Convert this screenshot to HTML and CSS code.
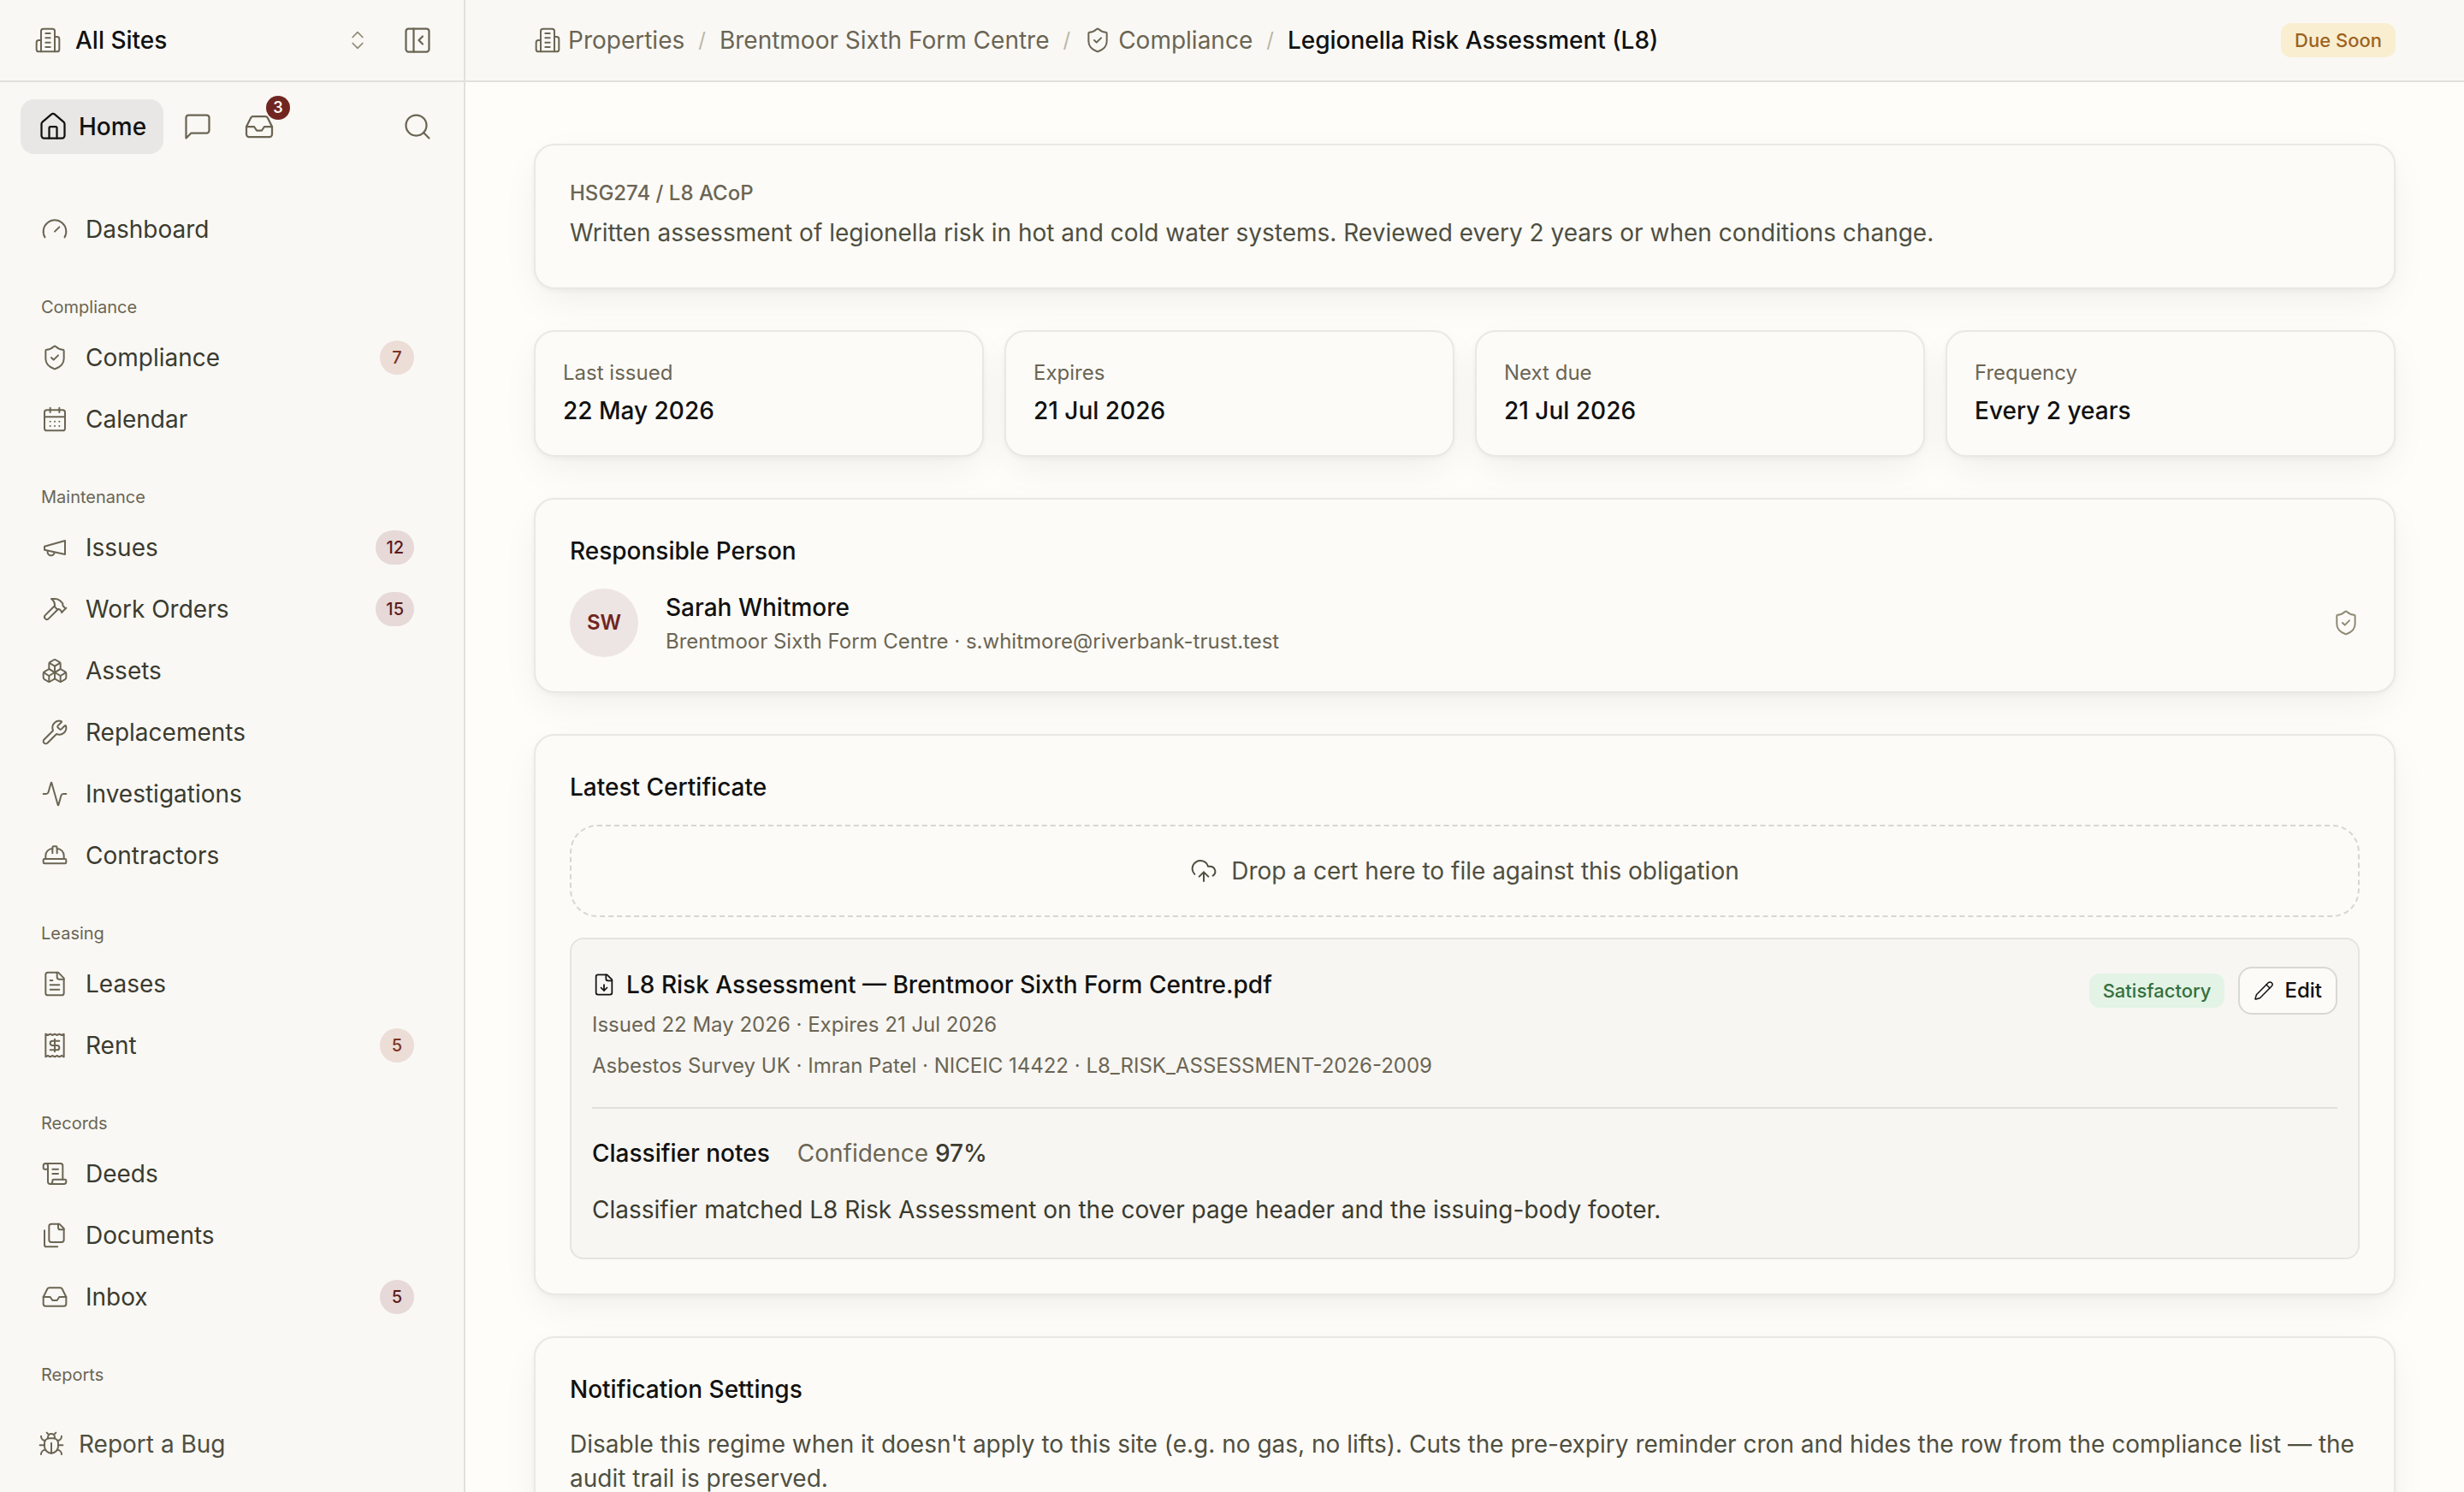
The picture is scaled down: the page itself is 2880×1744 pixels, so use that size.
FILE: index.html
```html
<!DOCTYPE html>
<html lang="en">
<head>
<meta charset="utf-8">
<title>Legionella Risk Assessment (L8)</title>
<link rel="stylesheet" href="styles.css">
</head>
<body>
<svg class="sprite" aria-hidden="true">
  <symbol id="building" viewBox="0 0 24 24"><path d="M6 22V4a2 2 0 0 1 2-2h8a2 2 0 0 1 2 2v18Z"/><path d="M6 12H4a2 2 0 0 0-2 2v6a2 2 0 0 0 2 2h2"/><path d="M18 9h2a2 2 0 0 1 2 2v9a2 2 0 0 1-2 2h-2"/><path d="M10 6h4M10 10h4M10 14h4M10 18h4"/></symbol>
  <symbol id="chevrons" viewBox="0 0 24 24"><path d="m7 15 5 5 5-5M7 9l5-5 5 5"/></symbol>
  <symbol id="panel" viewBox="0 0 24 24"><rect width="18" height="18" x="3" y="3" rx="2"/><path d="M9 3v18M16 15l-3-3 3-3"/></symbol>
  <symbol id="home" viewBox="0 0 24 24"><path d="M15 21v-8a1 1 0 0 0-1-1h-4a1 1 0 0 0-1 1v8"/><path d="M3 10a2 2 0 0 1 .709-1.528l7-5.999a2 2 0 0 1 2.582 0l7 5.999A2 2 0 0 1 21 10v9a2 2 0 0 1-2 2H5a2 2 0 0 1-2-2z"/></symbol>
  <symbol id="message" viewBox="0 0 24 24"><path d="M21 15a2 2 0 0 1-2 2H7l-4 4V5a2 2 0 0 1 2-2h14a2 2 0 0 1 2 2z"/></symbol>
  <symbol id="inbox" viewBox="0 0 24 24"><path d="M22 12h-6l-2 3h-4l-2-3H2"/><path d="M5.45 5.11 2 12v6a2 2 0 0 0 2 2h16a2 2 0 0 0 2-2v-6l-3.45-6.89A2 2 0 0 0 16.76 4H7.24a2 2 0 0 0-1.79 1.11z"/></symbol>
  <symbol id="search" viewBox="0 0 24 24"><circle cx="11" cy="11" r="8"/><path d="m21 21-4.3-4.3"/></symbol>
  <symbol id="gauge" viewBox="0 0 24 24"><path d="m12 14 4-4"/><path d="M3.34 19a10 10 0 1 1 17.32 0"/></symbol>
  <symbol id="shield" viewBox="0 0 24 24"><path d="M20 13c0 5-3.5 7.5-7.66 8.95a1 1 0 0 1-.67-.01C7.5 20.5 4 18 4 13V6a1 1 0 0 1 1-1c2 0 4.5-1.2 6.24-2.72a1.17 1.17 0 0 1 1.52 0C14.51 3.81 17 5 19 5a1 1 0 0 1 1 1z"/><path d="m9 12 2 2 4-4"/></symbol>
  <symbol id="calendar" viewBox="0 0 24 24"><path d="M8 2v4M16 2v4"/><rect width="18" height="18" x="3" y="4" rx="2"/><path d="M3 10h18M8 14h.01M12 14h.01M16 14h.01M8 18h.01M12 18h.01M16 18h.01"/></symbol>
  <symbol id="megaphone" viewBox="0 0 24 24"><path d="m3 11 18-5v12L3 14v-3z"/><path d="M11.6 16.8a3 3 0 1 1-5.8-1.6"/></symbol>
  <symbol id="hammer" viewBox="0 0 24 24"><path d="m15 12-8.373 8.373a1 1 0 1 1-3-3L12 9"/><path d="m18 15 4-4"/><path d="m21.5 11.5-1.914-1.914A2 2 0 0 1 19 8.172V7l-2.26-2.26a6 6 0 0 0-4.202-1.756L9 2.96l.92.82A6.18 6.18 0 0 1 12 8.4V10l2 2h1.172a2 2 0 0 1 1.414.586L18.5 14.5"/></symbol>
  <symbol id="boxes" viewBox="0 0 24 24"><path d="M2.97 12.92A2 2 0 0 0 2 14.63v3.24a2 2 0 0 0 .97 1.71l3 1.8a2 2 0 0 0 2.06 0L12 19v-5.5l-5-3-4.03 2.42Z"/><path d="m7 16.5-4.74-2.85M7 16.5l5-3M7 16.5v5.17"/><path d="M12 13.5V19l3.97 2.38a2 2 0 0 0 2.06 0l3-1.8a2 2 0 0 0 .97-1.71v-3.24a2 2 0 0 0-.97-1.71L17 10.5l-5 3Z"/><path d="m17 16.5-5-3M17 16.5l4.74-2.85M17 16.5v5.17"/><path d="M7.97 4.42A2 2 0 0 0 7 6.13v4.37l5 3 5-3V6.13a2 2 0 0 0-.97-1.71l-3-1.8a2 2 0 0 0-2.06 0l-3 1.8Z"/><path d="M12 8 7.26 5.15M12 8l4.74-2.85M12 13.5V8"/></symbol>
  <symbol id="wrench" viewBox="0 0 24 24"><path d="M14.7 6.3a1 1 0 0 0 0 1.4l1.6 1.6a1 1 0 0 0 1.4 0l3.106-3.105c.32-.322.863-.22.983.218a6 6 0 0 1-8.259 7.057l-7.91 7.91a1 1 0 0 1-2.999-3l7.91-7.91a6 6 0 0 1 7.057-8.259c.438.12.54.662.219.984z"/></symbol>
  <symbol id="activity" viewBox="0 0 24 24"><path d="M22 12h-2.48a2 2 0 0 0-1.93 1.46l-2.35 8.36a.25.25 0 0 1-.48 0L9.24 2.18a.25.25 0 0 0-.48 0l-2.35 8.36A2 2 0 0 1 4.49 12H2"/></symbol>
  <symbol id="hardhat" viewBox="0 0 24 24"><path d="M10 10V5a1 1 0 0 1 1-1h2a1 1 0 0 1 1 1v5"/><path d="M14 6a6 6 0 0 1 6 6v3"/><path d="M4 15v-3a6 6 0 0 1 6-6"/><rect x="2" y="15" width="20" height="4" rx="1"/></symbol>
  <symbol id="filetext" viewBox="0 0 24 24"><path d="M15 2H6a2 2 0 0 0-2 2v16a2 2 0 0 0 2 2h12a2 2 0 0 0 2-2V7Z"/><path d="M14 2v4a2 2 0 0 0 2 2h4M10 9H8M16 13H8M16 17H8"/></symbol>
  <symbol id="receipt" viewBox="0 0 24 24"><path d="M4 2v20l2-1 2 1 2-1 2 1 2-1 2 1 2-1 2 1V2l-2 1-2-1-2 1-2-1-2 1-2-1-2 1Z"/><path d="M16 8h-6a2 2 0 1 0 0 4h4a2 2 0 1 1 0 4H8M12 17.5v-11"/></symbol>
  <symbol id="scroll" viewBox="0 0 24 24"><path d="M15 12h-5M15 8h-5M19 17V5a2 2 0 0 0-2-2H4"/><path d="M8 21h12a2 2 0 0 0 2-2v-1a1 1 0 0 0-1-1H11a1 1 0 0 0-1 1v1a2 2 0 1 1-4 0V5a2 2 0 1 0-4 0v2a1 1 0 0 0 1 1h3"/></symbol>
  <symbol id="files" viewBox="0 0 24 24"><path d="M20 7h-3a2 2 0 0 1-2-2V2"/><path d="M9 18a2 2 0 0 1-2-2V4a2 2 0 0 1 2-2h7l4 4v10a2 2 0 0 1-2 2Z"/><path d="M3 7.6v12.8A1.6 1.6 0 0 0 4.6 22h9.8"/></symbol>
  <symbol id="bug" viewBox="0 0 24 24"><path d="M12 20v-9"/><path d="M14 7a4 4 0 0 1 4 4v3a6 6 0 0 1-12 0v-3a4 4 0 0 1 4-4z"/><path d="M14.12 3.88 16 2M8 2l1.88 1.88M9 7.13V6a3 3 0 1 1 6 0v1.13M21 21a4 4 0 0 0-3.81-4M21 5a4 4 0 0 1-3.55 3.97M22 13h-4M3 21a4 4 0 0 1 3.81-4M3 5a4 4 0 0 0 3.55 3.97M6 13H2"/></symbol>
  <symbol id="upload" viewBox="0 0 24 24"><path d="M12 13v8M4 14.899A7 7 0 1 1 15.71 8h1.79a4.5 4.5 0 0 1 2.5 8.242M8 17l4-4 4 4"/></symbol>
  <symbol id="filedown" viewBox="0 0 24 24"><path d="M15 2H6a2 2 0 0 0-2 2v16a2 2 0 0 0 2 2h12a2 2 0 0 0 2-2V7Z"/><path d="M14 2v4a2 2 0 0 0 2 2h4M12 18v-6M9 15l3 3 3-3"/></symbol>
  <symbol id="pencil" viewBox="0 0 24 24"><path d="M21.174 6.812a1 1 0 0 0-3.986-3.987L3.842 16.174a2 2 0 0 0-.5.83l-1.321 4.352a.5.5 0 0 0 .623.622l4.353-1.32a2 2 0 0 0 .83-.497z"/><path d="m15 5 4 4"/></symbol>
</svg>

<div class="app">
  <aside class="sidebar">
    <div class="site-bar">
      <button class="site-switch"><svg class="icon"><use href="#building"/></svg><span>All Sites</span><svg class="icon icon-sm"><use href="#chevrons"/></svg></button>
      <button class="icon-btn"><svg class="icon icon-lg"><use href="#panel"/></svg></button>
    </div>
    <div class="tabs">
      <button class="tab-home"><svg class="icon icon-lg"><use href="#home"/></svg><span>Home</span></button>
      <button class="icon-btn"><svg class="icon icon-lg"><use href="#message"/></svg></button>
      <button class="icon-btn"><svg class="icon icon-lg"><use href="#inbox"/></svg><span class="dot">3</span></button>
      <button class="icon-btn push"><svg class="icon icon-lg"><use href="#search"/></svg></button>
    </div>
    <nav class="nav">
      <section class="group">
        <a class="item"><svg class="icon"><use href="#gauge"/></svg><span>Dashboard</span></a>
      </section>
      <section class="group">
        <h2 class="group-label">Compliance</h2>
        <a class="item"><svg class="icon"><use href="#shield"/></svg><span>Compliance</span><b class="count count-warm">7</b></a>
        <a class="item"><svg class="icon"><use href="#calendar"/></svg><span>Calendar</span></a>
      </section>
      <section class="group">
        <h2 class="group-label">Maintenance</h2>
        <a class="item"><svg class="icon"><use href="#megaphone"/></svg><span>Issues</span><b class="count">12</b></a>
        <a class="item"><svg class="icon"><use href="#hammer"/></svg><span>Work Orders</span><b class="count">15</b></a>
        <a class="item"><svg class="icon"><use href="#boxes"/></svg><span>Assets</span></a>
        <a class="item"><svg class="icon"><use href="#wrench"/></svg><span>Replacements</span></a>
        <a class="item"><svg class="icon"><use href="#activity"/></svg><span>Investigations</span></a>
        <a class="item"><svg class="icon"><use href="#hardhat"/></svg><span>Contractors</span></a>
      </section>
      <section class="group">
        <h2 class="group-label">Leasing</h2>
        <a class="item"><svg class="icon"><use href="#filetext"/></svg><span>Leases</span></a>
        <a class="item"><svg class="icon"><use href="#receipt"/></svg><span>Rent</span><b class="count count-warm">5</b></a>
      </section>
      <section class="group">
        <h2 class="group-label">Records</h2>
        <a class="item"><svg class="icon"><use href="#scroll"/></svg><span>Deeds</span></a>
        <a class="item"><svg class="icon"><use href="#files"/></svg><span>Documents</span></a>
        <a class="item"><svg class="icon"><use href="#inbox"/></svg><span>Inbox</span><b class="count">5</b></a>
      </section>
      <section class="group">
        <h2 class="group-label">Reports</h2>
      </section>
    </nav>
    <div class="sidebar-foot"><svg class="icon"><use href="#bug"/></svg><span>Report a Bug</span></div>
  </aside>

  <div class="page">
    <header class="topbar">
      <nav class="crumbs">
        <a class="crumb"><svg class="icon"><use href="#building"/></svg><span>Properties</span></a>
        <span class="slash">/</span>
        <a class="crumb"><span>Brentmoor Sixth Form Centre</span></a>
        <span class="slash">/</span>
        <a class="crumb"><svg class="icon"><use href="#shield"/></svg><span>Compliance</span></a>
        <span class="slash">/</span>
        <span class="crumb current">Legionella Risk Assessment (L8)</span>
      </nav>
      <span class="pill pill-amber">Due Soon</span>
    </header>

    <main class="content">
      <section class="card intro">
        <p class="eyebrow">HSG274 / L8 ACoP</p>
        <p class="lede">Written assessment of legionella risk in hot and cold water systems. Reviewed every 2 years or when conditions change.</p>
      </section>

      <div class="stats">
        <div class="card stat"><span class="stat-label">Last issued</span><strong class="stat-value">22 May 2026</strong></div>
        <div class="card stat"><span class="stat-label">Expires</span><strong class="stat-value">21 Jul 2026</strong></div>
        <div class="card stat"><span class="stat-label">Next due</span><strong class="stat-value">21 Jul 2026</strong></div>
        <div class="card stat"><span class="stat-label">Frequency</span><strong class="stat-value">Every 2 years</strong></div>
      </div>

      <section class="card block">
        <h3 class="title">Responsible Person</h3>
        <div class="person">
          <span class="avatar">SW</span>
          <div class="person-text">
            <span class="name">Sarah Whitmore</span>
            <span class="small">Brentmoor Sixth Form Centre · s.whitmore@riverbank-trust.test</span>
          </div>
          <svg class="icon icon-faint"><use href="#shield"/></svg>
        </div>
      </section>

      <section class="card block">
        <h3 class="title">Latest Certificate</h3>
        <div class="dropzone"><svg class="icon"><use href="#upload"/></svg><span>Drop a cert here to file against this obligation</span></div>
        <div class="cert">
          <div class="cert-head">
            <div class="cert-info">
              <div class="cert-name"><svg class="icon icon-sm"><use href="#filedown"/></svg><span>L8 Risk Assessment — Brentmoor Sixth Form Centre.pdf</span></div>
              <span class="small">Issued 22 May 2026 · Expires 21 Jul 2026</span>
              <span class="small">Asbestos Survey UK · Imran Patel · NICEIC 14422 · L8_RISK_ASSESSMENT-2026-2009</span>
            </div>
            <div class="cert-actions">
              <span class="pill pill-green">Satisfactory</span>
              <button class="edit"><svg class="icon icon-xs"><use href="#pencil"/></svg><span>Edit</span></button>
            </div>
          </div>
          <div class="notes">
            <div class="notes-head"><strong>Classifier notes</strong><span class="confidence">Confidence <b>97%</b></span></div>
            <p class="notes-text">Classifier matched L8 Risk Assessment on the cover page header and the issuing-body footer.</p>
          </div>
        </div>
      </section>

      <section class="card block">
        <h3 class="title">Notification Settings</h3>
        <p class="body-text">Disable this regime when it doesn't apply to this site (e.g. no gas, no lifts). Cuts the pre-expiry reminder cron and hides the row from the compliance list — the audit trail is preserved.</p>
      </section>
    </main>
  </div>
</div>
</body>
</html>
```

FILE: styles.css
```css
:root {
  --ink: #111110;
  --text: #3b3b2f;
  --body: #4f4f40;
  --muted: #6b6553;
  --faint: #8f8a74;
  --line: #e1e0dd;
  --card-line: #e8e8e5;
  --maroon: #712521;
}

* { box-sizing: border-box; margin: 0; padding: 0; }

body {
  height: 1744px;
  overflow: hidden;
  background: #fefdf9;
  color: var(--ink);
  font: 400 28px/40px Inter, "Liberation Sans", sans-serif;
}

button { border: 0; background: none; font: inherit; color: inherit; }
.sprite { position: absolute; width: 0; height: 0; }

.icon {
  width: 32px;
  height: 32px;
  flex: none;
  fill: none;
  stroke: currentColor;
  stroke-width: 1.5;
  stroke-linecap: round;
  stroke-linejoin: round;
}
.icon-lg { width: 36px; height: 36px; }
.icon-sm { width: 28px; height: 28px; }
.icon-xs { width: 24px; height: 24px; }
.icon-faint { color: var(--faint); margin-left: auto; }

.app { display: flex; height: 1744px; }

/* Sidebar */
.sidebar {
  width: 544px;
  flex: none;
  display: flex;
  flex-direction: column;
  background: #f9f8f5;
  border-right: 2px solid var(--line);
}
.site-bar {
  height: 96px;
  flex: none;
  display: flex;
  align-items: center;
  justify-content: space-between;
  padding: 0 22px 0 40px;
  border-bottom: 2px solid var(--line);
}
.site-switch { display: flex; align-items: center; gap: 16px; width: 392px; font-weight: 500; color: var(--ink); }
.site-switch .icon { color: var(--muted); }
.site-switch .icon-sm { margin-left: auto; color: var(--faint); }
.icon-btn {
  position: relative;
  width: 64px;
  height: 64px;
  display: flex;
  align-items: center;
  justify-content: center;
  color: var(--muted);
}
.tabs { display: flex; gap: 8px; padding: 20px 22px 0 24px; flex: none; }
.tab-home {
  display: flex;
  align-items: center;
  gap: 12px;
  height: 64px;
  padding: 0 20px;
  border-radius: 16px;
  background: #e8e7e5;
  font-weight: 500;
}
.push { margin-left: auto; }
.dot {
  position: absolute;
  top: -4px;
  right: -4px;
  width: 28px;
  height: 28px;
  border-radius: 14px;
  background: var(--maroon);
  color: #fbf6f0;
  font-size: 18px;
  line-height: 28px;
  font-weight: 600;
  text-align: center;
}
.nav { flex: 1; min-height: 0; overflow: hidden; padding: 56px 58px 0 48px; display: flex; flex-direction: column; gap: 32px; }
.group { display: flex; flex-direction: column; gap: 8px; flex: none; }
.group-label { height: 46px; line-height: 54px; font-size: 20px; font-weight: 400; color: var(--muted); }
.item { display: flex; align-items: center; gap: 20px; height: 64px; color: var(--text); }
.item .icon { color: var(--muted); }
.count {
  min-width: 40px;
  height: 40px;
  margin-left: auto;
  padding: 0 12px;
  border-radius: 20px;
  background: #e6d9d7;
  color: #5d1a19;
  font-size: 20px;
  line-height: 40px;
  font-weight: 500;
  text-align: center;
}
.count-warm { background: #ecddd7; color: #7d3323; }
.sidebar-foot { height: 112px; flex: none; display: flex; align-items: center; gap: 16px; padding-left: 44px; color: var(--body); }
.sidebar-foot .icon { color: var(--muted); }

/* Top bar */
.page { flex: 1; min-width: 0; }
.topbar {
  height: 96px;
  display: flex;
  align-items: center;
  justify-content: space-between;
  padding: 0 80px;
  background: #f9f8f5;
  border-bottom: 2px solid var(--line);
}
.crumbs { display: flex; align-items: center; gap: 16px; color: var(--muted); }
.crumb { display: flex; align-items: center; gap: 8px; }
.current { color: var(--ink); font-weight: 500; }
.slash { color: #bab7a4; font-size: 24px; }
.pill { height: 40px; padding: 0 16px; border-radius: 12px; font-size: 22px; line-height: 40px; font-weight: 500; }
.pill-amber { background: #faeed1; color: #9c6321; }
.pill-green { background: #e3f3e5; color: #34703f; }

/* Cards */
.content { display: flex; flex-direction: column; gap: 48px; padding: 72px 80px 0; }
.card {
  background: #fcfbf8;
  border: 2px solid var(--card-line);
  border-radius: 24px;
  box-shadow: 0 2px 6px rgba(0, 0, 0, .04), 0 16px 48px -8px rgba(0, 0, 0, .07);
}
.intro { height: 170px; padding: 40px; }
.eyebrow { font-size: 24px; line-height: 32px; font-weight: 500; color: var(--muted); }
.lede { margin-top: 10px; color: var(--body); }
.stats { display: grid; grid-template-columns: repeat(4, 1fr); gap: 24px; }
.stat { display: flex; flex-direction: column; gap: 8px; padding: 32px; }
.stat-label { font-size: 24px; line-height: 32px; color: var(--muted); }
.stat-value { font-weight: 500; }
.block { display: flex; flex-direction: column; gap: 24px; padding: 40px; }
.title { font-size: 28px; font-weight: 500; }
.small { font-size: 24px; line-height: 32px; color: var(--muted); }
.person { display: flex; align-items: center; gap: 32px; }
.avatar {
  width: 80px;
  height: 80px;
  border-radius: 50%;
  background: #ede5e3;
  color: var(--maroon);
  font-size: 24px;
  line-height: 80px;
  font-weight: 600;
  text-align: center;
}
.person-text { display: flex; flex-direction: column; gap: 4px; }
.name { font-weight: 500; }

.dropzone {
  height: 108px;
  display: flex;
  align-items: center;
  justify-content: center;
  gap: 16px;
  border: 2px dashed #d6d6d2;
  border-radius: 32px;
  color: var(--body);
}
.cert { height: 376px; padding: 32px 24px; border: 2px solid #e4e4e1; border-radius: 16px; background: #f7f6f3; }
.cert-head { display: flex; justify-content: space-between; align-items: flex-start; }
.cert-info { display: flex; flex-direction: column; padding-top: 1px; }
.cert-info .small { margin-top: 11px; }
.cert-info .small + .small { margin-top: 16px; }
.cert-name { display: flex; align-items: center; gap: 12px; font-weight: 500; }
.cert-actions { display: flex; align-items: center; gap: 16px; }
.edit {
  height: 56px;
  display: flex;
  align-items: center;
  gap: 12px;
  padding: 0 16px;
  border: 2px solid #d9d8d5;
  border-radius: 16px;
  background: #fcfbf8;
  font-size: 24px;
  font-weight: 500;
}
.notes { margin-top: 32px; padding-top: 32px; border-top: 2px solid var(--line); }
.notes-head { display: flex; gap: 32px; }
.notes-head strong, .confidence b { font-weight: 500; }
.confidence { color: var(--muted); }
.confidence b { color: var(--text); }
.notes-text { margin-top: 26px; color: var(--text); }
.body-text { color: var(--body); }
```
